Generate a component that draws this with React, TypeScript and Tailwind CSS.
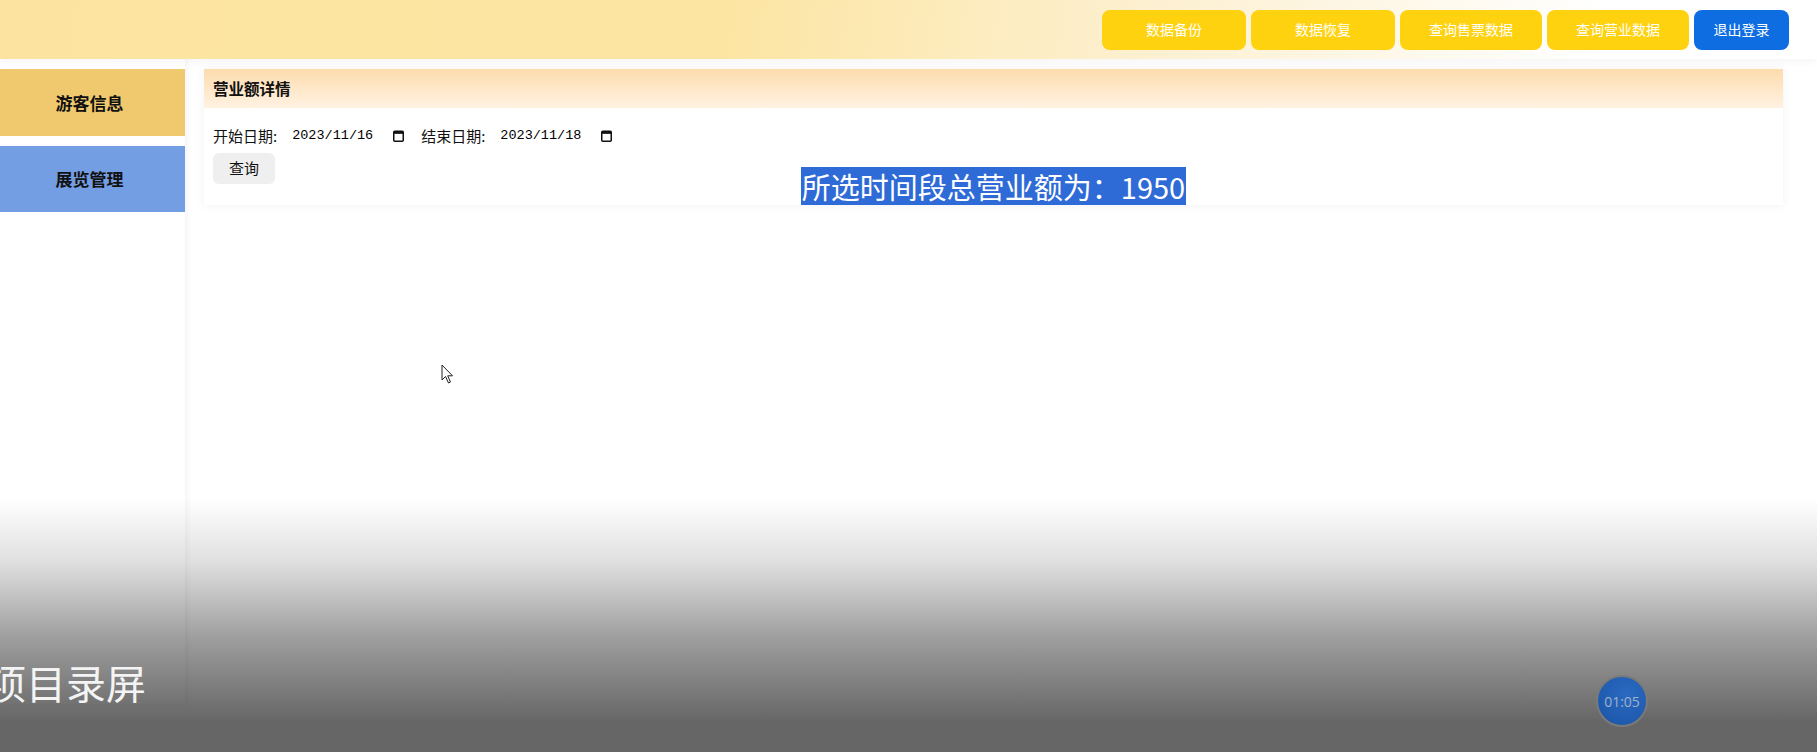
import React from "react";

const topButtons = [
  { label: "数据备份", w: "w-[144px]", bg: "bg-[#ffd20f]" },
  { label: "数据恢复", w: "w-[144px]", bg: "bg-[#ffd20f]" },
  { label: "查询售票数据", w: "w-[142px]", bg: "bg-[#ffd20f]" },
  { label: "查询营业数据", w: "w-[142px]", bg: "bg-[#ffd20f]" },
  { label: "退出登录", w: "w-[95px]", bg: "bg-[#0e6de0]" },
];

function CalendarIcon() {
  return (
    <svg width="11" height="12" viewBox="0 0 11 12">
      <rect x="0.75" y="1.25" width="9.5" height="10" rx="1" fill="none" stroke="#111" strokeWidth="1.5" />
      <rect x="0.75" y="1.25" width="9.5" height="2.6" fill="#111" />
    </svg>
  );
}

function DateField({ label, value }: { label: string; value: string }) {
  return (
    <div className="flex items-center">
      <span className="text-[15px] text-[#111]">{label}</span>
      <span className="ml-[15px] font-['Liberation_Mono',monospace] text-[13.5px] text-black">{value}</span>
      <span className="ml-[20px] flex items-center">
        <CalendarIcon />
      </span>
    </div>
  );
}

export default function App() {
  return (
    <div className="relative h-[752px] w-full overflow-hidden bg-white font-['Noto_Sans_CJK_SC','Noto_Sans',sans-serif]">
      {/* 顶部栏 */}
      <div className="relative z-10 flex h-[59px] items-center justify-end gap-[5px] bg-[linear-gradient(100deg,#fce4a0_0%,#fce5a3_40%,#fdf1d4_65%,#ffffff_88%)] pr-[28px] shadow-[0_3px_8px_rgba(0,0,0,0.04)]">
        {topButtons.map((b) => (
          <div
            key={b.label}
            className={`flex h-[40px] items-center justify-center rounded-[8px] text-[14px] text-white ${b.w} ${b.bg}`}
          >
            {b.label}
          </div>
        ))}
      </div>

      <div className="flex">
        {/* 左侧菜单 */}
        <div className="h-[645px] w-[185px] shrink-0 bg-white pt-[10px] shadow-[2px_0_6px_rgba(0,0,0,0.05)]">
          <div className="flex h-[67px] items-center justify-center bg-[#f0c96e] pr-[6px] text-[17px] font-bold text-[#111]">
            游客信息
          </div>
          <div className="mt-[10px] flex h-[66px] items-center justify-center bg-[#739ee3] pr-[6px] text-[17px] font-bold text-[#111]">
            展览管理
          </div>
        </div>

        {/* 主内容 */}
        <div className="flex-1 pl-[19px] pr-[34px] pt-[10px]">
          <div className="bg-white shadow-[0_0_10px_rgba(0,0,0,0.06)]">
            <div className="flex h-[39px] items-center bg-[linear-gradient(to_bottom,#fddcae_0%,#fff2e2_100%)] px-[9px] text-[15.5px] font-bold text-[#111]">
              营业额详情
            </div>
            <div className="px-[9px] pt-[17px]">
              <div className="flex h-[22px] items-center">
                <DateField label="开始日期:" value="2023/11/16" />
                <div className="ml-[17px]">
                  <DateField label="结束日期:" value="2023/11/18" />
                </div>
              </div>
              <div className="mt-[6px] grid grid-cols-[1fr_auto_1fr]">
                <div>
                  <div className="flex h-[31px] w-[62px] items-center justify-center rounded-[6px] bg-[#efefef] text-[15px] text-[#111]">
                    查询
                  </div>
                </div>
                <div className="mt-[14px] bg-[#2f6bd7] px-[1px] text-[29px] leading-[38px] text-white">
                  所选时间段总营业额为：1950
                </div>
                <div />
              </div>
            </div>
          </div>
        </div>
      </div>

      {/* 鼠标指针 */}
      <svg className="absolute left-[441px] top-[364px]" width="14" height="21" viewBox="0 0 14 21">
        <path d="M1 1 L1 16 L4.5 12.5 L7.5 19 L9.5 18 L6.7 11.8 L11.5 11.8 Z" fill="#fff" stroke="#222" strokeWidth="1" strokeLinejoin="round" />
      </svg>

      {/* 录屏遮罩 */}
      <div className="absolute bottom-0 left-0 h-[254px] w-full bg-[linear-gradient(to_bottom,rgba(0,0,0,0)_0%,rgba(0,0,0,0.12)_25%,rgba(0,0,0,0.38)_55%,rgba(0,0,0,0.6)_88%,rgba(0,0,0,0.6)_100%)]">
        <div className="ml-[-14px] mt-[156px] text-[40px] leading-[56px] text-[#f4f4f4]">项目录屏</div>
      </div>

      {/* 计时器 */}
      <div className="absolute left-[1596px] top-[675px] flex h-[52px] w-[52px] items-center justify-center rounded-full border-[2px] border-[#7a7a7a] bg-[radial-gradient(circle_at_60%_35%,#2a6ac2_0%,#1f5aad_70%,#1c529e_100%)]">
        <span className="font-['Open_Sans',sans-serif] text-[14px] text-[#9fb2cb]">01:05</span>
      </div>
    </div>
  );
}
